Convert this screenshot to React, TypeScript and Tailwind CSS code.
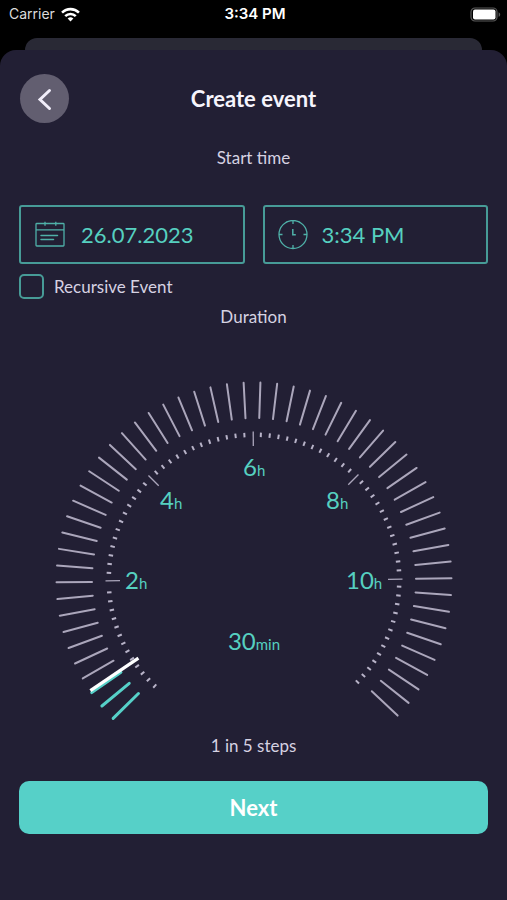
import { useState } from 'react';

// Dial geometry, in the units of the svg viewBox
const CX = 235;
const CY = 251;
const START = 224.7;
const DEG_PER_HOUR = 22.5;
const TICK_COUNT = 56;
const TICK_STEP = 4.87;

const HOUR_LABELS = [
  { value: '2', x: 106, y: 260 },
  { value: '4', x: 141, y: 180 },
  { value: '6', x: 224, y: 147 },
  { value: '8', x: 307, y: 180 },
  { value: '10', x: 327, y: 260 },
];

// Runs of small dots between the hour marks
const DOT_GROUPS = [
  { from: 223.1, count: 13 },
  { from: 272.8, count: 12 },
  { from: 317.7, count: 12 },
  { from: 362.7, count: 12 },
  { from: 407.7, count: 12 },
  { from: 452.6, count: 13 },
];

function ray(bearing: number, inner: number, outer: number) {
  const a = (bearing * Math.PI) / 180;
  return {
    x1: CX + inner * Math.sin(a),
    y1: CY - inner * Math.cos(a),
    x2: CX + outer * Math.sin(a),
    y2: CY - outer * Math.cos(a),
  };
}

function StatusBar() {
  return (
    <div className="grid grid-cols-3 items-center h-7 pl-[9px] pr-[6px] text-white text-[15px] leading-5 font-['Inter',sans-serif]">
      <div className="flex items-center gap-1.5 text-[#dcdcdc]">
        <span className="text-[14px]">Carrier</span>
        <svg className="w-[19px] h-[15px]" viewBox="0 0 18 14" fill="none" stroke="#fff" strokeWidth="2.4">
          <path d="M1 5.2a11.4 11.4 0 0 1 16 0" />
          <path d="M4 8.5a7.1 7.1 0 0 1 10 0" />
          <path d="M6.3 10.9a3.9 3.9 0 0 1 5.4 0L9 13.6z" fill="#fff" stroke="none" />
        </svg>
      </div>
      <span className="text-center font-semibold">3:34 PM</span>
      <svg className="w-[31px] h-[15px] justify-self-end" viewBox="0 0 31 15">
        <rect x="1" y="1" width="26" height="13" rx="4" fill="none" stroke="#5a5a5a" strokeWidth="1.2" />
        <rect x="3" y="2.5" width="22.5" height="10" rx="2" fill="#fff" />
        <path d="M28.6 5.2v4.6c1-.4 1.6-1.3 1.6-2.3s-.6-1.9-1.6-2.3z" fill="#5a5a5a" />
      </svg>
    </div>
  );
}

function CalendarIcon() {
  return (
    <svg className="w-[30px] h-[30px] shrink-0" viewBox="0 0 30 30" fill="none" stroke="#4fb0a8" strokeWidth="1.3">
      <rect x="1" y="3.5" width="28" height="22.5" rx="0.8" />
      <path d="M1 9.8h28M10 1.7v4M20.8 1.7v4" />
      <path d="M6 15.5h16.5M6 19.5h12.5" strokeWidth="1.5" strokeLinecap="round" />
    </svg>
  );
}

function ClockIcon() {
  return (
    <svg className="w-[30px] h-[30px] shrink-0" viewBox="0 0 30 30" fill="none" stroke="#4fb0a8" strokeWidth="1.3">
      <circle cx="15" cy="14.5" r="14" />
      <path d="M15 .5V4M15 25v3.500M1 14.500h3.500M25.500 14.500H29" />
      <path d="M14.800 9v5.800h3" strokeWidth="1.5" />
    </svg>
  );
}

function DurationDial({ minutes }: { minutes: number }) {
  const current = START + (minutes / 60) * DEG_PER_HOUR;
  const ticks = Array.from({ length: TICK_COUNT }, (_, i) => 225.5 + i * TICK_STEP);

  return (
    <svg className="block w-full max-w-[469px] mx-auto" viewBox="0 0 469 405">
      {ticks.map((b) => {
        const active = b <= current;
        return (
          <line
            key={b}
            {...ray(b, 162, 197.5)}
            stroke={active ? '#56d0c8' : '#aba6bb'}
            strokeWidth={active ? 3 : 2}
            strokeLinecap="round"
          />
        );
      })}

      {DOT_GROUPS.map((g) =>
        Array.from({ length: g.count }, (_, i) => (
          <line key={g.from + i * 3.5} {...ray(g.from + i * 3.5, 143, 147.5)} stroke="#b8b3c8" strokeWidth="2" />
        ))
      )}

      {[2, 4, 6, 8, 10].map((h) => (
        <line key={h} {...ray(START + h * DEG_PER_HOUR, 134, 148.5)} stroke="#aba6bb" strokeWidth="1.3" />
      ))}

      <line {...ray(current, 139.5, 197.5)} stroke="#fff" strokeWidth="3.2" />

      {HOUR_LABELS.map((l) => (
        <text key={l.value} x={l.x} y={l.y} className="fill-[#56d0c0] text-[24px]">
          {l.value}
          <tspan className="text-[15px]">h</tspan>
        </text>
      ))}
      <text x={CX} y="321" textAnchor="middle" className="fill-[#56d0c0] text-[24px]">
        {minutes}
        <tspan className="text-[15px]">min</tspan>
      </text>
    </svg>
  );
}

export default function App() {
  const [recursive, setRecursive] = useState(false);
  const [minutes, setMinutes] = useState(30);

  return (
    <div className="min-h-screen flex flex-col bg-black font-['Lato',sans-serif]">
      <StatusBar />

      {/* Edge of the screen underneath */}
      <div className="mt-[10px] mx-[25px] h-3 rounded-t-xl bg-[#292935]" />

      <main className="flex-1 rounded-t-2xl bg-[#221f34] px-[19px] pt-6 pb-6 text-[17px] leading-6 text-[#d6d2e2]">
        <header className="grid grid-cols-[49px_1fr_49px] items-center px-px">
          <button aria-label="Back" className="size-[49px] rounded-full bg-[#625e70] flex items-center justify-center">
            <svg className="w-6 h-6" viewBox="0 0 24 24" fill="none" stroke="#f1eefa" strokeWidth="3" strokeLinecap="round">
              <path d="M16.5 3.5L7 12.5l9.500 9" />
            </svg>
          </button>
          <h1 className="text-center text-[22px] font-bold text-[#f6f4fc]">Create event</h1>
        </header>

        <h2 className="mt-[23px] text-center">Start time</h2>

        <div className="mt-[35px] grid grid-cols-2 gap-[18px] text-[22px] text-[#56d0c0]">
          <button className="h-[59px] flex items-center gap-4 px-[14px] border-2 border-[#479b97] rounded-[3px]">
            <CalendarIcon />
            26.07.2023
          </button>
          <button className="h-[59px] flex items-center gap-3.5 px-[13px] border-2 border-[#479b97] rounded-[3px]">
            <ClockIcon />
            3:34 PM
          </button>
        </div>

        <label className="mt-[10px] flex items-center gap-[10px]">
          <input
            type="checkbox"
            checked={recursive}
            onChange={(e) => setRecursive(e.target.checked)}
            className="appearance-none size-[25px] border-2 border-[#479b97] rounded-[5px] checked:bg-[#56d0c8]"
          />
          Recursive Event
        </label>

        <h2 className="mt-[6px] text-center">Duration</h2>

        <div className="relative">
          <DurationDial minutes={minutes} />
          <input
            type="range"
            aria-label="Duration"
            min={0}
            max={720}
            step={15}
            value={minutes}
            onChange={(e) => setMinutes(Number(e.target.value))}
            className="absolute inset-0 w-full h-full opacity-0 cursor-pointer"
          />
        </div>

        <p className="text-center">1 in 5 steps</p>

        <button className="mt-[23px] w-full h-[53px] rounded-[10px] bg-[#56d0c8] text-[22px] font-bold text-white">
          Next
        </button>
      </main>
    </div>
  );
}
